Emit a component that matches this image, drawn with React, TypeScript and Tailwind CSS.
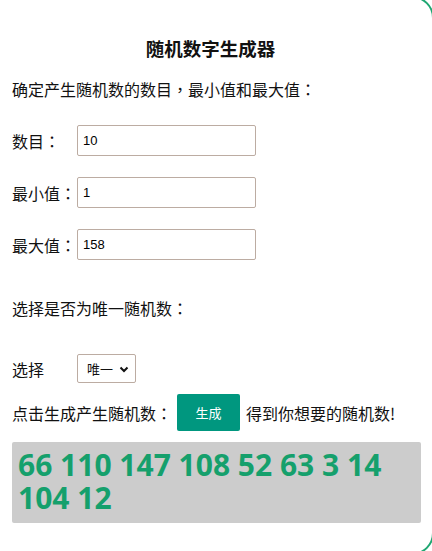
const cjk = "font-['Microsoft_YaHei','Noto_Sans_CJK_TC',sans-serif]";

function Field({ label, value }: { label: string; value: string }) {
  return (
    <div className="flex items-center">
      <span className="w-[65px] text-[16px] leading-6">{label}</span>
      <input
        readOnly
        value={value}
        className="h-[31px] w-[179px] rounded-[2px] border border-[#bcaca2] bg-white px-[5px] font-['Liberation_Sans',sans-serif] text-[13px] text-black outline-none"
      />
    </div>
  );
}

export default function App() {
  const numbers = [66, 110, 147, 108, 52, 63, 3, 14, 104, 12];
  return (
    <div className={`relative h-[551px] w-[432px] overflow-hidden bg-white text-[#111] ${cjk}`}>
      {/* green frame, only its corners show */}
      <div className="pointer-events-none absolute -top-[4px] -bottom-[4px] -left-[40px] -right-[2px] rounded-[22px] border-2 border-[#1fa772]" />

      <div className="flex flex-col pl-[12px] pr-[11px] pt-[35px]">
        <h2 className="ml-[-12px] text-center text-[18.5px] font-bold leading-[27px]">随机数字生成器</h2>
        <p className="mt-[15px] text-[16px] leading-6">确定产生随机数的数目，最小值和最大值：</p>

        <div className="mt-[24px] flex flex-col gap-[21px]">
          <Field label="数目：" value="10" />
          <Field label="最小值：" value="1" />
          <Field label="最大值：" value="158" />
        </div>

        <p className="mt-[36px] text-[16px] leading-6">选择是否为唯一随机数：</p>

        <div className="mt-[34px] flex items-center">
          <span className="w-[65px] text-[16px] leading-6">选择</span>
          <div className="flex h-[29px] w-[59px] items-center justify-between rounded-[2px] border border-[#bcaca2] pl-[9px] pr-[6px] text-[13px]">
            <span>唯一</span>
            <svg width="10" height="7" viewBox="0 0 10 7" className="mt-[1px]">
              <path d="M1.5 1.5 L5 5 L8.5 1.5" fill="none" stroke="#111" strokeWidth="2" />
            </svg>
          </div>
        </div>

        <div className="mt-[11px] flex items-center">
          <span className="text-[16px] leading-6">点击生成产生随机数：</span>
          <button
            type="button"
            className="ml-[5px] flex h-[37px] w-[63px] items-center justify-center rounded-[2px] bg-[#00977f] text-[13px] text-white"
          >
            生成
          </button>
          <span className="ml-[6px] text-[16px] leading-6">得到你想要的随机数!</span>
        </div>

        <div className="mt-[11px] h-[81px] rounded-[2px] bg-[#cccccc] pl-[6px] pr-[8px] pt-[6px]">
          <p className="font-['Open_Sans',sans-serif] text-[30px] font-bold leading-[33px] text-[#15a06c]">
            {numbers.join(' ')}
          </p>
        </div>
      </div>
    </div>
  );
}
